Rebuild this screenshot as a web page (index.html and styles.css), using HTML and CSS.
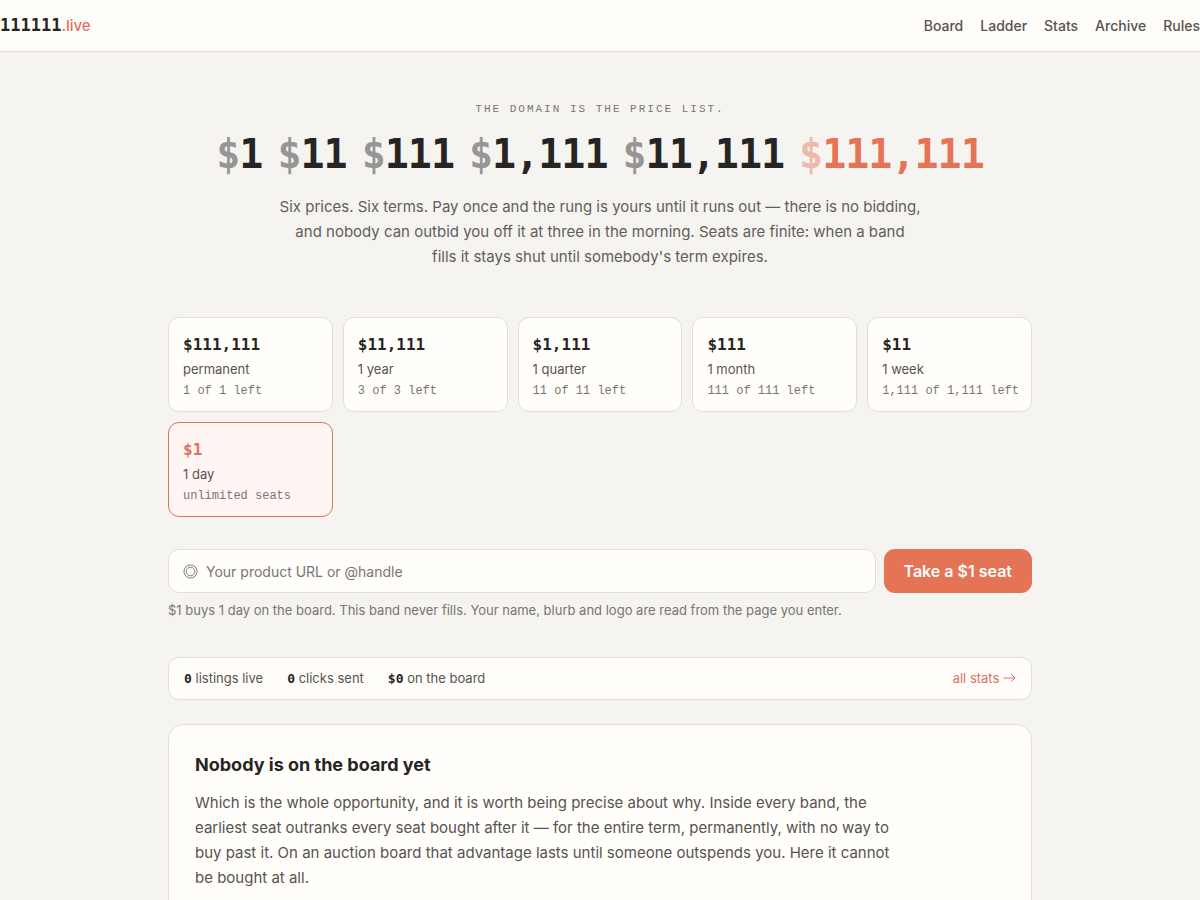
FILE: index.html
```
<!DOCTYPE html>
<html lang="en">
<head>
    <meta charset="UTF-8">
    <meta name="viewport" content="width=device-width, initial-scale=1.0">
    <title>111111.live</title>
    <link rel="stylesheet" href="styles.css">
</head>
<body>

<header class="site-header">
    <a class="brand" href="/">111111<span>.live</span></a>
    <nav class="site-nav">
        <a href="#board">Board</a>
        <a href="#ladder">Ladder</a>
        <a href="#stats">Stats</a>
        <a href="#archive">Archive</a>
        <a href="#rules">Rules</a>
    </nav>
</header>

<main class="container">
    <section class="hero">
        <p class="eyebrow">The domain is the price list.</p>
        <h1 class="prices">
            <span><i>$</i>1</span>
            <span><i>$</i>11</span>
            <span><i>$</i>111</span>
            <span><i>$</i>1,111</span>
            <span><i>$</i>11,111</span>
            <span class="top"><i>$</i>111,111</span>
        </h1>
        <p class="lead">Six prices. Six terms. Pay once and the rung is yours until it runs out — there is no bidding, and nobody can outbid you off it at three in the morning. Seats are finite: when a band<br> fills it stays shut until somebody's term expires.</p>
    </section>

    <div class="ladder" id="ladder">
        <button type="button" class="rung">
            <b>$111,111</b>
            <span class="term">permanent</span>
            <span class="seats">1 of 1 left</span>
        </button>
        <button type="button" class="rung">
            <b>$11,111</b>
            <span class="term">1 year</span>
            <span class="seats">3 of 3 left</span>
        </button>
        <button type="button" class="rung">
            <b>$1,111</b>
            <span class="term">1 quarter</span>
            <span class="seats">11 of 11 left</span>
        </button>
        <button type="button" class="rung">
            <b>$111</b>
            <span class="term">1 month</span>
            <span class="seats">111 of 111 left</span>
        </button>
        <button type="button" class="rung">
            <b>$11</b>
            <span class="term">1 week</span>
            <span class="seats">1,111 of 1,111 left</span>
        </button>
        <button type="button" class="rung selected" aria-pressed="true">
            <b>$1</b>
            <span class="term">1 day</span>
            <span class="seats">unlimited seats</span>
        </button>
    </div>

    <form class="claim" action="#" method="POST">
        <label class="field" for="target">
            <svg viewBox="0 0 16 16" aria-hidden="true">
                <circle cx="8" cy="8" r="7"/>
                <circle cx="8" cy="8" r="4.6"/>
            </svg>
            <input type="text" id="target" name="target" placeholder="Your product URL or @handle" aria-label="Your product URL or @handle">
        </label>
        <button type="submit" class="submit-btn">Take a $1 seat</button>
    </form>
    <p class="hint">$1 buys 1 day on the board. This band never fills. Your name, blurb and logo are read from the page you enter.</p>

    <div class="stats" id="stats">
        <span><b>0</b> listings live</span>
        <span><b>0</b> clicks sent</span>
        <span><b>$0</b> on the board</span>
        <a href="#stats">all stats
            <svg viewBox="0 0 13 10" aria-hidden="true"><path d="M0.5 5H12M8.5 1.5L12 5L8.5 8.5"/></svg>
        </a>
    </div>

    <section class="empty" id="board">
        <h2>Nobody is on the board yet</h2>
        <p>Which is the whole opportunity, and it is worth being precise about why. Inside every band, the earliest seat outranks every seat bought after it — for the entire term, permanently, with no way to buy past it. On an auction board that advantage lasts until someone outspends you. Here it cannot be bought at all.</p>
    </section>
</main>

</body>
</html>
```
FILE: styles.css
```
* {
    box-sizing: border-box;
}

body {
    margin: 0;
    background-color: #f6f4f1;
    color: #57534f;
    font-family: Inter, sans-serif;
    font-size: 15px;
    line-height: 25px;
}

a {
    color: inherit;
    text-decoration: none;
}

button,
input {
    font: inherit;
}

.site-header {
    display: flex;
    justify-content: space-between;
    align-items: center;
    height: 52px;
    background-color: #fffdfa;
    border-bottom: 1px solid #e3dedb;
}

.brand {
    color: #262523;
    font-family: "DejaVu Sans Mono", monospace;
    font-size: 17px;
    font-weight: bold;
}

.brand span {
    color: #dc7260;
    font-family: Inter, sans-serif;
    font-size: 15px;
    font-weight: 500;
}

.site-nav {
    display: flex;
    gap: 17px;
    font-size: 14px;
    font-weight: 500;
}

.container {
    max-width: 900px;
    margin: 0 auto;
    padding: 45px 18px;
}

.hero {
    text-align: center;
}

.eyebrow {
    margin: 0;
    color: #7a7571;
    font-family: "Liberation Mono", monospace;
    font-size: 11px;
    letter-spacing: 2px;
    text-transform: uppercase;
}

.prices {
    display: flex;
    flex-wrap: wrap;
    justify-content: center;
    gap: 0 15px;
    margin: 7px 0 15px;
    color: #262523;
    font-family: "DejaVu Sans Mono", monospace;
    font-size: 40px;
    line-height: 50px;
    letter-spacing: -1px;
}

.prices i {
    font-style: normal;
    opacity: 0.45;
}

.prices .top {
    color: #e57356;
}

.lead {
    max-width: 645px;
    margin: 0 auto 48px;
    color: #625d59;
}

.ladder {
    display: grid;
    grid-template-columns: repeat(auto-fill, minmax(150px, 1fr));
    gap: 10px;
    margin-bottom: 32px;
}

.rung {
    display: flex;
    flex-direction: column;
    gap: 2px;
    padding: 15px 14px 10px;
    background-color: #fffefa;
    border: 1px solid #e3dedb;
    border-radius: 11px;
    color: #57534f;
    line-height: 20px;
    text-align: left;
    white-space: nowrap;
    cursor: pointer;
}

.rung b {
    color: #262523;
    font-family: "DejaVu Sans Mono", monospace;
    font-size: 16px;
    line-height: 24px;
}

.rung .term {
    font-size: 13px;
}

.rung .seats {
    color: #7a7571;
    font-family: "Liberation Mono", monospace;
    font-size: 12px;
}

.rung.selected {
    background-color: #fff6f4;
    border-color: #dc7260;
}

.rung.selected b {
    color: #dc7260;
}

.claim {
    display: flex;
    gap: 8px;
}

.field {
    display: flex;
    flex: 1;
    align-items: center;
    gap: 8px;
    height: 44px;
    padding: 0 14px;
    background-color: #fffefa;
    border: 1px solid #e3dedb;
    border-radius: 11px;
}

.field svg {
    width: 15px;
    height: 15px;
    fill: none;
    stroke: #7a7571;
}

.field input {
    flex: 1;
    padding: 0;
    background: none;
    border: none;
    outline: none;
    color: #262523;
    font-size: 14px;
}

.field input::placeholder {
    color: #7a7571;
    opacity: 1;
}

.submit-btn {
    padding: 0 20px;
    background-color: #e57356;
    border: none;
    border-radius: 11px;
    color: #fffefa;
    font-size: 16px;
    font-weight: 600;
    cursor: pointer;
}

.hint {
    margin: 6px 0 36px;
    color: #7a7571;
    font-size: 13px;
    line-height: 22px;
}

.stats {
    display: flex;
    flex-wrap: wrap;
    gap: 8px 24px;
    margin-bottom: 24px;
    padding: 10px 15px;
    background-color: #fffdfa;
    border: 1px solid #e3dedb;
    border-radius: 11px;
    font-size: 13px;
    line-height: 20px;
}

.stats b {
    color: #262523;
    font-family: "DejaVu Sans Mono", monospace;
}

.stats a {
    margin-left: auto;
    color: #dc7260;
}

.stats svg {
    width: 13px;
    height: 10px;
    fill: none;
    stroke: currentColor;
}

.empty {
    padding: 26px;
    background-color: #fffefa;
    border: 1px solid #e3dedb;
    border-radius: 16px;
}

.empty h2 {
    margin: 0 0 11px;
    color: #262523;
    font-size: 18px;
    line-height: 28px;
}

.empty p {
    max-width: 700px;
    margin: 0;
}
```
